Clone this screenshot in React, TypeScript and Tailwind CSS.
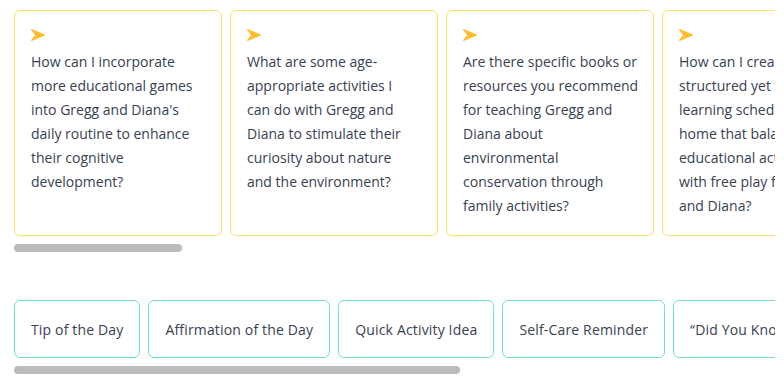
import React from 'react';

// first four cards keep the reference's line breaks; the rest wrap naturally
const questions: (string | string[])[] = [
  ['How can I incorporate', 'more educational games', "into Gregg and Diana's", 'daily routine to enhance', 'their cognitive', 'development?'],
  ['What are some age-', 'appropriate activities I', 'can do with Gregg and', 'Diana to stimulate their', 'curiosity about nature', 'and the environment?'],
  ['Are there specific books or', 'resources you recommend', 'for teaching Gregg and', 'Diana about', 'environmental', 'conservation through', 'family activities?'],
  ['How can I create a', 'structured yet flexible', 'learning schedule at', 'home that balances', 'educational activities', 'with free play for Gregg', 'and Diana?'],
  'What are some fun ways to encourage Gregg and Diana to share and cooperate with each other during playtime?',
  'How can I help Gregg and Diana build healthy sleep habits that support their growth and learning?',
  'What simple science experiments can I do at home with Gregg and Diana using everyday materials?',
  'How can I nurture Gregg and Diana’s creativity through art, music and imaginative play?',
  'What are good strategies for managing screen time for Gregg and Diana while keeping it educational?',
  'How can I introduce Gregg and Diana to basic math concepts through everyday activities like cooking?',
  'What outdoor activities can our family enjoy together on weekends to keep Gregg and Diana active?',
  'How can I support Gregg and Diana in expressing and understanding their emotions?',
  'What are some healthy snack ideas that Gregg and Diana can help prepare in the kitchen?',
  'How can I encourage a love of reading in Gregg and Diana from an early age?',
  'What family traditions could help Gregg and Diana feel connected and secure?',
  'How can I teach Gregg and Diana about kindness and empathy toward others?',
];

const prompts = [
  'Tip of the Day',
  'Affirmation of the Day',
  'Quick Activity Idea',
  'Self-Care Reminder',
  '“Did You Know?” Fact',
  'Joke of the Day',
  'Milestone Check-In',
];

const Arrow = () => (
  <svg width="14" height="12" viewBox="0 0 14 12" className="text-[#fbc02d]">
    <path
      d="M0.8 0.8 L13.2 6 L0.8 11.2 L5 6 Z"
      fill="currentColor"
      stroke="currentColor"
      strokeWidth="1.4"
      strokeLinejoin="round"
    />
  </svg>
);

const ScrollThumb = ({ width }: { width: string }) => (
  <div className="mt-2 h-2">
    <div className={`h-2 rounded-full bg-[#bbbbbb] ${width}`} />
  </div>
);

export default function App() {
  return (
    <div
      className="bg-white pt-[10px] pl-[14px] pr-[9px] text-[#374151]"
      style={{ fontFamily: '"Open Sans", sans-serif' }}
    >
      <div className="flex gap-2 overflow-hidden">
        {questions.map((q, i) => (
          <button
            key={i}
            className="flex w-[208px] shrink-0 flex-col items-start rounded-md border border-[#fcdf6b] bg-white px-4 pt-[18px] pb-[17px] text-left"
          >
            <Arrow />
            {Array.isArray(q) ? (
              <p className="mt-[9px] text-[14px] leading-6 whitespace-nowrap">
                {q.map((line) => (
                  <span key={line} className="block">
                    {line}
                  </span>
                ))}
              </p>
            ) : (
              <p className="mt-[9px] text-[14px] leading-6">{q}</p>
            )}
          </button>
        ))}
      </div>
      <ScrollThumb width="w-[168px]" />

      <div className="mt-12 flex gap-2 overflow-hidden">
        {prompts.map((p) => (
          <button
            key={p}
            className="flex h-[58px] shrink-0 items-center whitespace-nowrap rounded-md border border-[#6ee7b7] bg-white px-4 text-[14px] tracking-[0.16px]"
          >
            {p}
          </button>
        ))}
      </div>
      <ScrollThumb width="w-[446px]" />
    </div>
  );
}
